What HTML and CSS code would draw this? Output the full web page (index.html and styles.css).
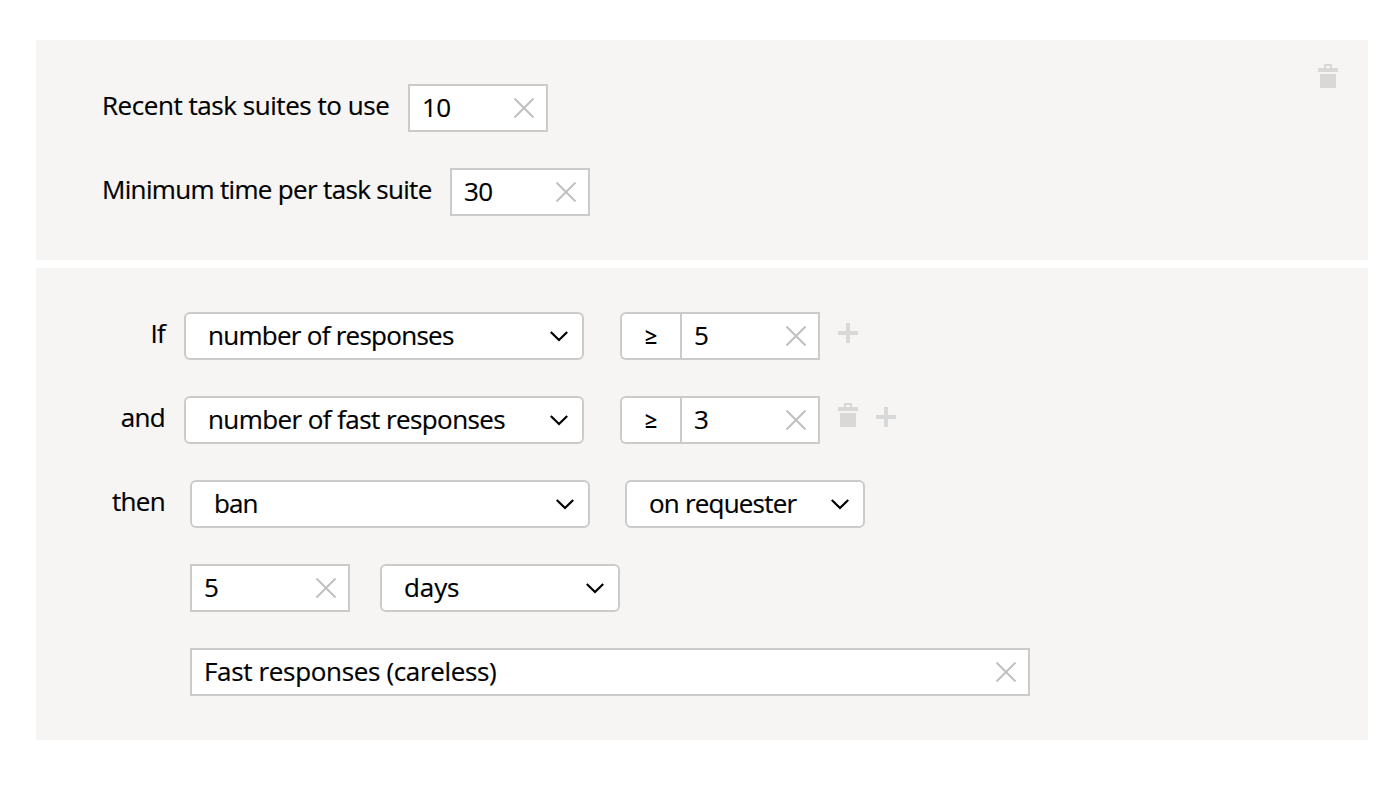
FILE: index.html
```html
<!DOCTYPE html>
<html lang="en">
<head>
<meta charset="utf-8">
<title>Quality control rule</title>
<link rel="stylesheet" href="styles.css">
</head>
<body>
<svg class="sprite" aria-hidden="true">
  <symbol id="clear" viewBox="0 0 20 20"><path d="M.5 .5L19.5 19.5M19.5 .5L.5 19.5" fill="none" stroke="#c0c0c0" stroke-width="2"/></symbol>
  <symbol id="chevron" viewBox="0 0 18 11"><path d="M.8 1L9 9L17.2 1" fill="none" stroke="#000" stroke-width="2.2"/></symbol>
  <symbol id="trash" viewBox="0 0 20 24"><path fill="#d8d8d8" fill-rule="evenodd" d="M6 0h8v4h6v4H0V4h6zM8 2v2h4V2zM2 10h16v14H2z"/></symbol>
  <symbol id="plus" viewBox="0 0 20 20"><path fill="#d8d8d8" d="M8 0h4v8h8v4h-8v8H8v-8H0V8h8z"/></symbol>
</svg>
<main class="rule">
  <section class="panel params">
    <div class="fields">
      <div class="row"><span class="label recent">Recent task suites to use</span><div class="input short"><span>10</span><svg class="clear"><use href="#clear"/></svg></div></div>
      <div class="row"><span class="label minimum">Minimum time per task suite</span><div class="input short"><span>30</span><svg class="clear"><use href="#clear"/></svg></div></div>
    </div>
    <svg class="trash"><use href="#trash"/></svg>
  </section>
  <section class="panel conditions">
    <div class="row">
      <span class="label key">If</span>
      <div class="select wide"><span class="t-responses">number of responses</span><svg class="chevron"><use href="#chevron"/></svg></div>
      <div class="compare"><span class="operator">≥</span><div class="input short"><span>5</span><svg class="clear"><use href="#clear"/></svg></div></div>
      <div class="actions"><svg class="plus"><use href="#plus"/></svg></div>
    </div>
    <div class="row">
      <span class="label key">and</span>
      <div class="select wide"><span class="t-fast">number of fast responses</span><svg class="chevron"><use href="#chevron"/></svg></div>
      <div class="compare"><span class="operator">≥</span><div class="input short"><span>3</span><svg class="clear"><use href="#clear"/></svg></div></div>
      <div class="actions"><svg class="trash"><use href="#trash"/></svg><svg class="plus"><use href="#plus"/></svg></div>
    </div>
    <div class="row action">
      <span class="label key">then</span>
      <div class="select wide"><span class="t-ban">ban</span><svg class="chevron"><use href="#chevron"/></svg></div>
      <div class="select narrow scope"><span class="t-requester">on requester</span><svg class="chevron"><use href="#chevron"/></svg></div>
    </div>
    <div class="row detail">
      <div class="input medium"><span>5</span><svg class="clear"><use href="#clear"/></svg></div>
      <div class="select narrow"><span class="t-days">days</span><svg class="chevron"><use href="#chevron"/></svg></div>
    </div>
    <div class="row detail">
      <div class="input long"><span class="t-reason">Fast responses (careless)</span><svg class="clear"><use href="#clear"/></svg></div>
    </div>
  </section>
</main>
</body>
</html>
```
FILE: styles.css
```css
* { box-sizing: border-box; }
body { margin: 0; background: #fff; color: #000; font: 26px/42px "Open Sans", "Noto Sans", sans-serif; letter-spacing: -.7px; -webkit-text-stroke: .2px #000; }
.sprite { display: none; }
svg { display: block; flex: none; }
.rule { display: flex; flex-direction: column; gap: 8px; padding: 40px 32px 46px 36px; }
.panel { background: #f6f5f3; }
.params { display: flex; justify-content: space-between; height: 220px; padding: 24px 30px 0 66px; }
.fields, .conditions { display: flex; flex-direction: column; gap: 36px; }
.fields { padding-top: 20px; }
.conditions { height: 472px; padding-top: 44px; }
.row { display: flex; align-items: flex-start; height: 48px; white-space: nowrap; }
.label { flex: none; }
.recent { width: 306px; letter-spacing: -.45px; }
.minimum { width: 348px; letter-spacing: -.67px; }
.key { width: 130px; margin-right: 18px; padding-right: 1px; text-align: right; }
.action .key { margin-right: 24px; }
.detail { padding-left: 154px; gap: 30px; }
.input, .select, .operator { height: 48px; border: 2px solid #cbcbcb; background: #fff; }
.input, .select { display: flex; justify-content: space-between; flex: none; }
.input { padding: 0 12px; }
.select { padding: 0 14px 0 22px; border-radius: 6px; }
.short { width: 140px; }
.medium { width: 160px; }
.long { width: 840px; }
.wide { width: 400px; }
.narrow { width: 240px; }
.scope { margin-left: 35px; }
.t-responses { letter-spacing: -.73px; }
.t-fast { letter-spacing: -.58px; }
.t-requester { letter-spacing: -.8px; }
.t-ban { letter-spacing: -.9px; }
.t-days { letter-spacing: -.1px; }
.t-reason { letter-spacing: -.34px; }
.compare { display: flex; margin: 0 18px 0 36px; }
.operator { width: 60px; border-right: 0; border-radius: 6px 0 0 6px; text-align: center; font-size: 22px; font-weight: 600; letter-spacing: 0; -webkit-text-stroke: 0; }
.actions { display: flex; gap: 18px; padding-top: 7px; }
.clear { width: 20px; height: 20px; margin-top: 12px; }
.chevron { width: 18px; height: 11px; margin-top: 17px; }
.trash { width: 20px; height: 24px; }
.plus { width: 20px; height: 20px; margin-top: 4px; }
```
